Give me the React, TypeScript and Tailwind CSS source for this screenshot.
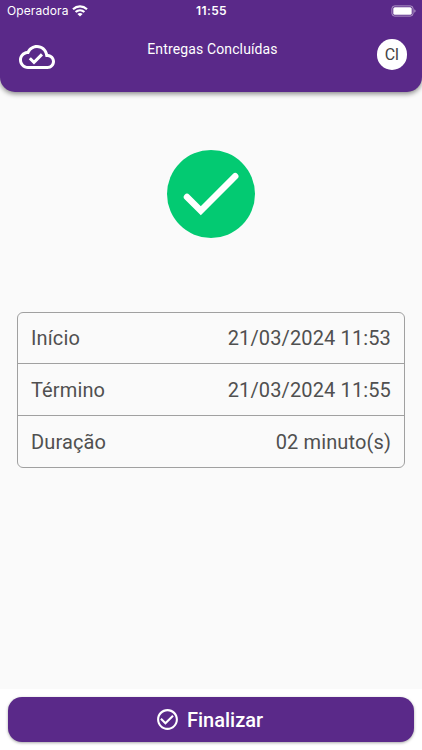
const rows = [
  { label: "Início", value: "21/03/2024 11:53" },
  { label: "Término", value: "21/03/2024 11:55" },
  { label: "Duração", value: "02 minuto(s)" },
];

function WifiIcon() {
  return (
    <svg width="16" height="12" viewBox="0 0 16 12" fill="none" stroke="white" strokeWidth="2.2">
      <path d="M1 4.3C5 .5 11 .5 15 4.3" />
      <path d="M3.6 7C6.1 4.7 9.9 4.7 12.4 7" />
      <path d="M8 11.5L5.4 8.9C6.8 7.6 9.2 7.6 10.6 8.9Z" fill="white" stroke="none" />
    </svg>
  );
}

function BatteryIcon() {
  return (
    <svg width="26" height="12" viewBox="0 0 26 12">
      <rect x="0.9" y="0.9" width="21.2" height="10.2" rx="2.8" fill="none" stroke="white" strokeOpacity=".5" />
      <rect x="2.3" y="2.3" width="18.4" height="7.4" rx="1.5" fill="white" />
      <path d="M23.4 4.2c1.5.6 1.5 3 0 3.6z" fill="white" fillOpacity=".6" />
    </svg>
  );
}

function CloudDoneIcon() {
  return (
    <svg className="mt-1" width="36" height="36" viewBox="0 0 24 24" fill="white">
      <path d="M19.35 10.04C18.67 6.59 15.64 4 12 4 9.11 4 6.6 5.64 5.35 8.04 2.34 8.36 0 10.91 0 14c0 3.31 2.69 6 6 6h13c2.76 0 5-2.24 5-5 0-2.64-2.05-4.78-4.65-4.96zM19 18H6c-2.21 0-4-1.79-4-4 0-2.05 1.53-3.76 3.56-3.97l1.07-.11.5-.95C8.08 7.14 9.94 6 12 6c2.62 0 4.88 1.86 5.39 4.43l.3 1.5 1.53.11c1.56.1 2.78 1.41 2.78 2.96 0 1.65-1.35 3-3 3zm-9-3.82l-2.09-2.09L6.5 13.5 10 17l6.01-6.01-1.41-1.41z" />
    </svg>
  );
}

function CheckCircleIcon() {
  return (
    <svg width="25" height="25" viewBox="0 0 24 24" fill="white">
      <path d="M16.59 7.58L10 14.17l-3.59-3.58L5 12l5 5 8-8zM12 2C6.48 2 2 6.48 2 12s4.48 10 10 10 10-4.48 10-10S17.52 2 12 2zm0 18c-4.42 0-8-3.58-8-8s3.58-8 8-8 8 3.58 8 8-3.58 8-8 8z" />
    </svg>
  );
}

export default function App() {
  return (
    <div className="flex h-[750px] w-[422px] flex-col bg-[#fafafa] font-['Roboto',sans-serif]">
      <header className="h-[92px] rounded-b-[15px] bg-[#5a2989] text-white shadow-[0_2px_5px_rgba(0,0,0,0.45)]">
        <div className="grid h-[22px] grid-cols-[1fr_auto_1fr] items-center pr-[5px] pl-[7px] font-['Inter',sans-serif] text-[12px]">
          <div className="flex items-center gap-1">
            <span className="tracking-[0.1px]">Operadora</span>
            <WifiIcon />
          </div>
          <span className="pr-px font-semibold tracking-[0.4px]">11:55</span>
          <div className="flex justify-end">
            <BatteryIcon />
          </div>
        </div>
        <div className="grid h-[65px] grid-cols-[1fr_auto_1fr] items-center pr-[15px] pl-[19px]">
          <CloudDoneIcon />
          <h1 className="pr-px pb-[11px] text-[14px] leading-5 tracking-[0.13px]">Entregas Concluídas</h1>
          <div className="flex size-[30.5px] items-center justify-center justify-self-end rounded-full bg-white text-[16px] tracking-[-0.4px] text-[#444]">
            CI
          </div>
        </div>
      </header>

      <main className="flex flex-1 flex-col px-[17px] pt-[58px]">
        <svg className="self-center" width="88" height="88" viewBox="0 0 88 88">
          <circle cx="44" cy="44" r="44" fill="#03ca72" />
          <path d="M20 47L33.8 60.7L68.2 26.3" fill="none" stroke="white" strokeWidth="6.5" strokeLinecap="round" />
        </svg>
        <dl className="mt-[74px] divide-y divide-[#a0a0a0] rounded-[6px] border border-[#a0a0a0] text-[20px] tracking-[0.13px] text-[#505050]">
          {rows.map((row) => (
            <div key={row.label} className="flex h-[52px] items-center justify-between px-[13px] first:h-[51px] last:h-[51px]">
              <dt>{row.label}</dt>
              <dd>{row.value}</dd>
            </div>
          ))}
        </dl>
      </main>

      <footer className="h-[61px] bg-white px-2 pt-2">
        <button className="flex h-[45px] w-full items-center justify-center gap-[7px] rounded-[14px] bg-[#5a2989] pr-[4px] text-[20px] font-medium text-white shadow-[0_1px_3px_rgba(0,0,0,0.35)]">
          <CheckCircleIcon />
          <span>Finalizar</span>
        </button>
      </footer>
    </div>
  );
}
